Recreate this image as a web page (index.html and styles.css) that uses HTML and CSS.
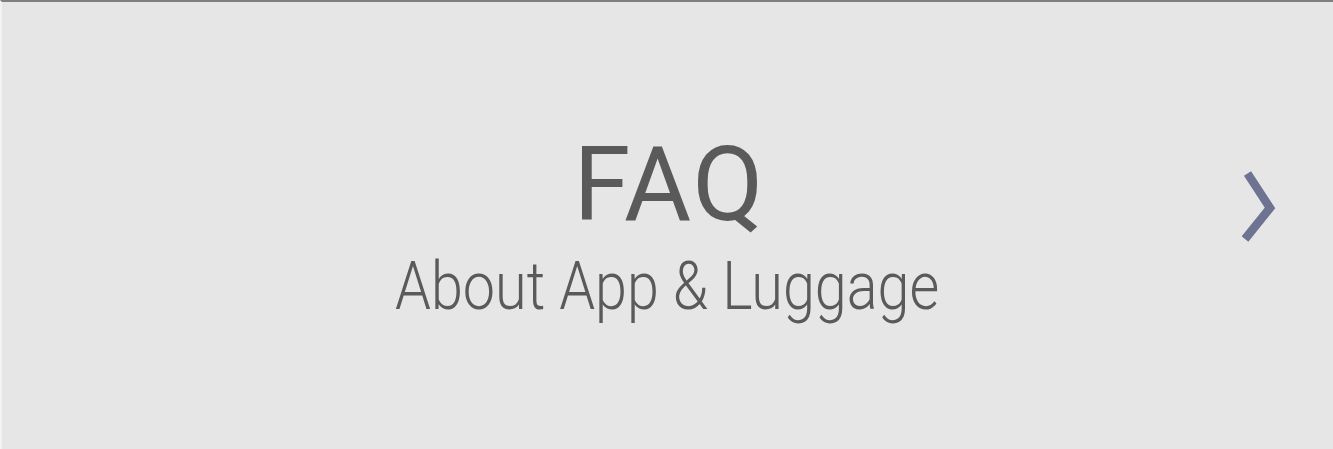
FILE: index.html
```html
<!DOCTYPE html>
<html>
<head>
<meta charset="utf-8">
<link rel="stylesheet" href="styles.css">
</head>
<body>
<div class="card">
  <div class="spacer"></div>
  <div class="text">
    <div class="title">FAQ</div>
    <div class="subtitle"><span class="sub-inner">About App &amp; Luggage</span></div>
  </div>
  <div class="arrow-cell">
    <svg class="chevron" width="44" height="80" viewBox="0 0 44 80">
      <polyline points="11.5,5.5 34,40 9,71" fill="none" stroke="#6d7390" stroke-width="8.5" stroke-linejoin="miter"/>
    </svg>
  </div>
</div>
</body>
</html>
```
FILE: styles.css
```css
html, body {
  margin: 0;
  padding: 0;
  background: #e6e6e6;
}
.card {
  box-sizing: border-box;
  width: 1333px;
  height: 449px;
  background: #e6e6e6;
  border-top: 2px solid #7f7f7f;
  border-left: 2px solid #f2f2f2;
  display: grid;
  grid-template-columns: 1fr auto 1fr;
  align-items: start;
  font-family: Roboto, "Liberation Sans", sans-serif;
  color: #5a5a5a;
}
.text {
  padding-top: 131px;
  text-align: center;
}
.title {
  font-size: 103px;
  line-height: 103px;
  font-weight: 400;
  letter-spacing: 2px;
  padding-left: 4px;
}
.subtitle {
  margin-top: 17px;
  font-size: 67px;
  line-height: 67px;
  font-weight: 300;
  width: 560px;
  display: flex;
  justify-content: center;
}
.sub-inner {
  display: inline-block;
  white-space: nowrap;
  transform: scaleX(0.858);
  transform-origin: center;
}
.arrow-cell {
  display: flex;
  justify-content: flex-end;
  padding-top: 166px;
  padding-right: 53px;
}
.chevron {
  display: block;
}
```
